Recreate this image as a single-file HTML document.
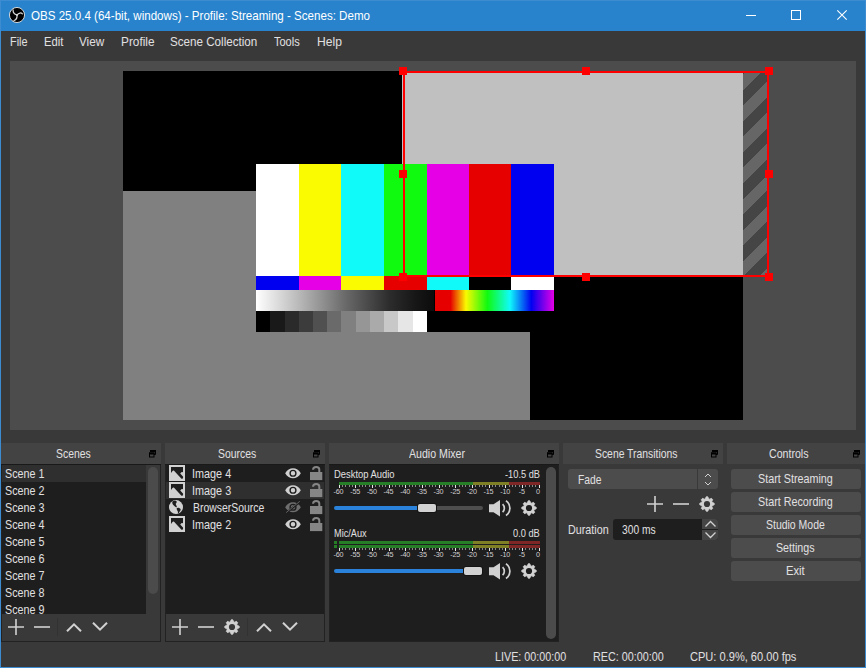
<!DOCTYPE html>
<html><head><meta charset="utf-8">
<style>
*{margin:0;padding:0;box-sizing:border-box}
html,body{width:866px;height:668px;overflow:hidden}
body{position:relative;background:#3d8bd0;font-family:"Liberation Sans",sans-serif}
.a{position:absolute}
.t{position:absolute;white-space:pre;line-height:1;transform-origin:0 0}
.tl{font-size:7.2px;color:#d0cfd0;width:30px;text-align:center;letter-spacing:-0.2px}
svg{position:absolute;overflow:visible}
.dt{position:absolute;top:443px;height:21px;background:#444344}
.dl{position:absolute;top:464px;height:1px;background:#1a191a}
.fl{position:absolute;top:450px;width:8px;height:8px}
.btn{position:absolute;left:731px;width:130px;height:20px;background:#4d4c4d;border-radius:3px}
</style></head><body>
<!-- main window bg -->
<div class="a" style="left:1px;top:1px;width:864px;height:30px;background:#2883cc"></div>
<div class="a" style="left:1px;top:31px;width:864px;height:636px;background:#3a393a"></div>

<!-- OBS logo -->
<svg style="left:9px;top:7px" width="16" height="16" viewBox="0 0 16 16">
  <circle cx="8" cy="8" r="7.55" fill="#000" stroke="#e6e6e6" stroke-width="0.9"/>
  <path d="M4.1 2.9C3.9 5.4 5.2 7.3 8 8M13.4 6.9C12.2 5.5 9.9 5.6 8 8M4.9 13.7C7.0 12.8 8.4 10.8 8 8" fill="none" stroke="#d6d6d6" stroke-width="1.25" stroke-linecap="round"/>
  <circle cx="8" cy="8" r="1.0" fill="#d6d6d6"/>
</svg>
<!-- window controls -->
<div class="a" style="left:746px;top:15px;width:10px;height:1px;background:#fff"></div>
<div class="a" style="left:791px;top:10px;width:10px;height:10px;border:1px solid #fff"></div>
<svg style="left:837px;top:10px" width="10" height="10" viewBox="0 0 10 10">
  <path d="M0.3 0.3 L9.7 9.7 M9.7 0.3 L0.3 9.7" stroke="#fff" stroke-width="1.1"/>
</svg>

<!-- preview -->
<div class="a" style="left:10px;top:61px;width:846px;height:369px;background:#4c4c4c"></div>
<div class="a" style="left:123px;top:71px;width:620px;height:349px;background:#000"></div>
<div class="a" style="left:123px;top:191px;width:407px;height:229px;background:#808080"></div>
<div class="a" style="left:402px;top:71px;width:341px;height:206px;background:#c0c0c0"></div>
<div class="a" style="left:743px;top:71px;width:25px;height:206px;background:repeating-linear-gradient(-45deg,#666 0,#666 6.8px,#454545 6.8px,#454545 17.8px,#666 17.8px,#666 22px)"></div>
<!-- color bars -->
<div class="a" style="left:256px;top:164px;width:298px;height:168px;background:#000"></div>
<div class="a" style="left:256px;top:164px;width:43px;height:112px;background:#fff"></div>
<div class="a" style="left:299px;top:164px;width:42px;height:112px;background:#fafa00"></div>
<div class="a" style="left:341px;top:164px;width:43px;height:112px;background:#10fafa"></div>
<div class="a" style="left:384px;top:164px;width:43px;height:112px;background:#10fa10"></div>
<div class="a" style="left:427px;top:164px;width:42px;height:112px;background:#e600e6"></div>
<div class="a" style="left:469px;top:164px;width:42px;height:112px;background:#e60000"></div>
<div class="a" style="left:511px;top:164px;width:43px;height:112px;background:#0000f0"></div>
<div class="a" style="left:256px;top:276px;width:43px;height:14px;background:#0000f0"></div>
<div class="a" style="left:299px;top:276px;width:42px;height:14px;background:#e600e6"></div>
<div class="a" style="left:341px;top:276px;width:43px;height:14px;background:#fafa00"></div>
<div class="a" style="left:384px;top:276px;width:43px;height:14px;background:#e60000"></div>
<div class="a" style="left:427px;top:276px;width:42px;height:14px;background:#10fafa"></div>
<div class="a" style="left:469px;top:276px;width:42px;height:14px;background:#000"></div>
<div class="a" style="left:511px;top:276px;width:43px;height:14px;background:#fff"></div>
<div class="a" style="left:256px;top:290px;width:178px;height:21px;background:linear-gradient(90deg,#fff 0%,#b6b6b6 25%,#6a6a6a 50%,#2c2c2c 75%,#161616 90%,#0c0c0c 100%)"></div>
<div class="a" style="left:435px;top:290px;width:119px;height:21px;background:linear-gradient(90deg,#e60000 0,#e60000 13%,#fafa00 26%,#10fa10 44%,#10fafa 63%,#0000f0 81%,#e600e6 100%)"></div>
<div class="a" style="left:256px;top:311px;width:171px;height:21px;background:linear-gradient(90deg,#000 0,#000 8.33%,#191919 8.33%,#191919 16.67%,#2a2a2a 16.67%,#2a2a2a 25%,#3c3c3c 25%,#3c3c3c 33.33%,#505050 33.33%,#505050 41.67%,#6a6a6a 41.67%,#6a6a6a 50%,#808080 50%,#808080 58.33%,#969696 58.33%,#969696 66.67%,#aaaaaa 66.67%,#aaaaaa 75%,#c8c8c8 75%,#c8c8c8 83.33%,#e6e6e6 83.33%,#e6e6e6 91.67%,#fff 91.67%)"></div>
<!-- selection box -->
<div class="a" style="left:403px;top:71px;width:366px;height:206px;border:2px solid #ff0000"></div>
<div class="a" style="left:399px;top:67px;width:8px;height:8px;background:#f00"></div>
<div class="a" style="left:582px;top:67px;width:8px;height:8px;background:#f00"></div>
<div class="a" style="left:765px;top:67px;width:8px;height:8px;background:#f00"></div>
<div class="a" style="left:399px;top:170px;width:8px;height:8px;background:#f00"></div>
<div class="a" style="left:765px;top:170px;width:8px;height:8px;background:#f00"></div>
<div class="a" style="left:399px;top:273px;width:8px;height:8px;background:#f00"></div>
<div class="a" style="left:582px;top:273px;width:8px;height:8px;background:#f00"></div>
<div class="a" style="left:765px;top:273px;width:8px;height:8px;background:#f00"></div>

<!-- ===== docks ===== -->
<!-- titles -->
<div class="dt" style="left:1px;width:160px"></div><div class="dl" style="left:1px;width:160px"></div>
<div class="dt" style="left:165px;width:160px"></div><div class="dl" style="left:165px;width:160px"></div>
<div class="dt" style="left:329px;width:230px"></div><div class="dl" style="left:329px;width:230px"></div>
<div class="dt" style="left:563px;width:160px"></div>
<div class="dt" style="left:727px;width:138px"></div>
<!-- float icons -->
<svg class="fl" style="left:149px" viewBox="0 0 8 8"><path d="M1.5 0.5h5v4h-1.5" fill="none" stroke="#000" stroke-width="1"/><rect x="1" y="0" width="6" height="2" fill="#000"/><rect x="0.5" y="3" width="4.5" height="4" fill="none" stroke="#000" stroke-width="1"/><rect x="0" y="2.5" width="5.5" height="2" fill="#000"/></svg>
<svg class="fl" style="left:313px" viewBox="0 0 8 8"><path d="M1.5 0.5h5v4h-1.5" fill="none" stroke="#000" stroke-width="1"/><rect x="1" y="0" width="6" height="2" fill="#000"/><rect x="0.5" y="3" width="4.5" height="4" fill="none" stroke="#000" stroke-width="1"/><rect x="0" y="2.5" width="5.5" height="2" fill="#000"/></svg>
<svg class="fl" style="left:547px" viewBox="0 0 8 8"><path d="M1.5 0.5h5v4h-1.5" fill="none" stroke="#000" stroke-width="1"/><rect x="1" y="0" width="6" height="2" fill="#000"/><rect x="0.5" y="3" width="4.5" height="4" fill="none" stroke="#000" stroke-width="1"/><rect x="0" y="2.5" width="5.5" height="2" fill="#000"/></svg>
<svg class="fl" style="left:711px" viewBox="0 0 8 8"><path d="M1.5 0.5h5v4h-1.5" fill="none" stroke="#000" stroke-width="1"/><rect x="1" y="0" width="6" height="2" fill="#000"/><rect x="0.5" y="3" width="4.5" height="4" fill="none" stroke="#000" stroke-width="1"/><rect x="0" y="2.5" width="5.5" height="2" fill="#000"/></svg>
<svg class="fl" style="left:853px" viewBox="0 0 8 8"><path d="M1.5 0.5h5v4h-1.5" fill="none" stroke="#000" stroke-width="1"/><rect x="1" y="0" width="6" height="2" fill="#000"/><rect x="0.5" y="3" width="4.5" height="4" fill="none" stroke="#000" stroke-width="1"/><rect x="0" y="2.5" width="5.5" height="2" fill="#000"/></svg>

<!-- Scenes dock -->
<div class="a" style="left:1px;top:465px;width:160px;height:177px;background:#232223"></div>
<div class="a" style="left:2px;top:465px;width:144px;height:149px;background:#1f1e1f"></div>
<div class="a" style="left:2px;top:465px;width:144px;height:17px;background:#302f30"></div>
<div class="a" style="left:146px;top:465px;width:14px;height:149px;background:#3a393a"></div>
<div class="a" style="left:148px;top:467px;width:10px;height:127px;background:#4c4b4c;border-radius:5px"></div>
<div class="a" style="left:2px;top:614px;width:158px;height:27px;background:#3a393a"></div>

<!-- Sources dock -->
<div class="a" style="left:165px;top:465px;width:160px;height:177px;background:#232223"></div>
<div class="a" style="left:166px;top:465px;width:158px;height:149px;background:#1f1e1f"></div>
<div class="a" style="left:166px;top:482px;width:158px;height:17px;background:#302f30"></div>
<div class="a" style="left:166px;top:614px;width:158px;height:27px;background:#3a393a"></div>

<!-- Mixer dock -->
<div class="a" style="left:329px;top:465px;width:230px;height:177px;background:#232223"></div>
<div class="a" style="left:330px;top:465px;width:228px;height:176px;background:#1f1e1f"></div>
<div class="a" style="left:546px;top:467px;width:10px;height:172px;background:#4c4b4c;border-radius:5px"></div>

<!-- Transitions dock -->
<div class="a" style="left:568px;top:469px;width:150px;height:20px;background:#4d4c4d;border-radius:3px"></div>
<div class="a" style="left:697px;top:469px;width:1px;height:20px;background:#3a393a"></div>
<div class="a" style="left:613px;top:519px;width:105px;height:21px;background:#1f1e1f;border-radius:3px"></div>
<div class="a" style="left:702px;top:519px;width:16px;height:10px;background:#464546;border-radius:0 3px 0 0"></div>
<div class="a" style="left:702px;top:530px;width:16px;height:10px;background:#464546;border-radius:0 0 3px 0"></div>

<!-- Controls -->
<div class="btn" style="top:469px"></div>
<div class="btn" style="top:492px"></div>
<div class="btn" style="top:515px"></div>
<div class="btn" style="top:538px"></div>
<div class="btn" style="top:561px"></div>

<svg style="left:169px;top:465px" width="16" height="16" viewBox="0 0 16 16">
<rect x="0" y="0" width="16" height="16" fill="#d2d1d2"/>
<path d="M2 2H14V7.4C13.4 6.8 12.2 6.9 11.7 7.9L11.2 8.6L14 11.5C14.4 12.3 14.2 13.2 13.6 13.6C13.0 14 12.4 13.8 12 13.3L5.3 6.0C4.7 5.4 4.0 5.5 3.5 6.1L2 8Z" fill="#1f1e1f"/>
<rect x="1" y="1" width="14" height="14" fill="none" stroke="#d2d1d2" stroke-width="1.2"/>
</svg>
<svg style="left:169px;top:482px" width="16" height="16" viewBox="0 0 16 16">
<rect x="0" y="0" width="16" height="16" fill="#d2d1d2"/>
<path d="M2 2H14V7.4C13.4 6.8 12.2 6.9 11.7 7.9L11.2 8.6L14 11.5C14.4 12.3 14.2 13.2 13.6 13.6C13.0 14 12.4 13.8 12 13.3L5.3 6.0C4.7 5.4 4.0 5.5 3.5 6.1L2 8Z" fill="#1f1e1f"/>
<rect x="1" y="1" width="14" height="14" fill="none" stroke="#d2d1d2" stroke-width="1.2"/>
</svg>
<svg style="left:169px;top:516px" width="16" height="16" viewBox="0 0 16 16">
<rect x="0" y="0" width="16" height="16" fill="#d2d1d2"/>
<path d="M2 2H14V7.4C13.4 6.8 12.2 6.9 11.7 7.9L11.2 8.6L14 11.5C14.4 12.3 14.2 13.2 13.6 13.6C13.0 14 12.4 13.8 12 13.3L5.3 6.0C4.7 5.4 4.0 5.5 3.5 6.1L2 8Z" fill="#1f1e1f"/>
<rect x="1" y="1" width="14" height="14" fill="none" stroke="#d2d1d2" stroke-width="1.2"/>
</svg>
<svg style="left:169px;top:500px" width="16" height="16" viewBox="0 0 16 16">
<circle cx="7" cy="7.1" r="7" fill="#d2d1d2"/>
<path d="M3.6 1.2L6.2 0.6L7.8 1.4L7.4 3.0L6.7 3.7L7.1 5.0L7.9 6.6L7.3 7.5L5.6 6.2L4.0 4.8L3.2 3.0Z" fill="#1f1e1f"/>
<path d="M7.7 8.0L9.8 7.8L11.7 9.1L11.3 10.8L10.3 12.0L9.7 13.6L9.0 13.2L8.8 11.3L7.9 9.9Z" fill="#1f1e1f"/>
</svg>
<svg style="left:285px;top:468px" width="16" height="10.5" viewBox="0 0 17 11">
<path d="M0.2 5.5C2.2 2.0 5.2 0.2 8.5 0.2C11.8 0.2 14.8 2.0 16.8 5.5C14.8 9.0 11.8 10.8 8.5 10.8C5.2 10.8 2.2 9.0 0.2 5.5Z" fill="#d2d1d2"/>
<circle cx="8.5" cy="5.5" r="3.1" fill="none" stroke="#1f1e1f" stroke-width="1.5"/></svg>
<svg style="left:310px;top:466px" width="14" height="15" viewBox="0 0 14 15">
<path d="M3.1 3.8V3.6C3.1 1.9 4.5 1.0 6.2 1.0C7.9 1.0 9.3 1.9 9.3 3.6V7" fill="none" stroke="#878687" stroke-width="2"/>
<rect x="0" y="6" width="12.3" height="8.1" fill="#878687"/>
</svg>
<svg style="left:285px;top:485px" width="16" height="10.5" viewBox="0 0 17 11">
<path d="M0.2 5.5C2.2 2.0 5.2 0.2 8.5 0.2C11.8 0.2 14.8 2.0 16.8 5.5C14.8 9.0 11.8 10.8 8.5 10.8C5.2 10.8 2.2 9.0 0.2 5.5Z" fill="#d2d1d2"/>
<circle cx="8.5" cy="5.5" r="3.1" fill="none" stroke="#1f1e1f" stroke-width="1.5"/></svg>
<svg style="left:310px;top:483px" width="14" height="15" viewBox="0 0 14 15">
<path d="M3.1 3.8V3.6C3.1 1.9 4.5 1.0 6.2 1.0C7.9 1.0 9.3 1.9 9.3 3.6V7" fill="none" stroke="#878687" stroke-width="2"/>
<rect x="0" y="6" width="12.3" height="8.1" fill="#878687"/>
</svg>
<svg style="left:285px;top:502px" width="16" height="10.5" viewBox="0 0 17 11">
<path d="M0.2 5.5C2.2 2.0 5.2 0.2 8.5 0.2C11.8 0.2 14.8 2.0 16.8 5.5C14.8 9.0 11.8 10.8 8.5 10.8C5.2 10.8 2.2 9.0 0.2 5.5Z" fill="#6f6e6f"/>
<circle cx="8.5" cy="5.5" r="3.1" fill="none" stroke="#1f1e1f" stroke-width="1.5"/><path d="M1.5 11.5L16 -0.5" stroke="#1f1e1f" stroke-width="2.2"/><path d="M1.2 11.2L15.7 -0.8" stroke="#6f6e6f" stroke-width="0.9"/></svg>
<svg style="left:310px;top:500px" width="14" height="15" viewBox="0 0 14 15">
<path d="M3.1 3.8V3.6C3.1 1.9 4.5 1.0 6.2 1.0C7.9 1.0 9.3 1.9 9.3 3.6V7" fill="none" stroke="#878687" stroke-width="2"/>
<rect x="0" y="6" width="12.3" height="8.1" fill="#878687"/>
</svg>
<svg style="left:285px;top:519px" width="16" height="10.5" viewBox="0 0 17 11">
<path d="M0.2 5.5C2.2 2.0 5.2 0.2 8.5 0.2C11.8 0.2 14.8 2.0 16.8 5.5C14.8 9.0 11.8 10.8 8.5 10.8C5.2 10.8 2.2 9.0 0.2 5.5Z" fill="#d2d1d2"/>
<circle cx="8.5" cy="5.5" r="3.1" fill="none" stroke="#1f1e1f" stroke-width="1.5"/></svg>
<svg style="left:310px;top:517px" width="14" height="15" viewBox="0 0 14 15">
<path d="M3.1 3.8V3.6C3.1 1.9 4.5 1.0 6.2 1.0C7.9 1.0 9.3 1.9 9.3 3.6V7" fill="none" stroke="#878687" stroke-width="2"/>
<rect x="0" y="6" width="12.3" height="8.1" fill="#878687"/>
</svg>
<svg style="left:8px;top:619px" width="16" height="16" viewBox="0 0 16 16"><path d="M0 8H16M8 0V16" stroke="#d2d1d2" stroke-width="1.6"/></svg>
<svg style="left:34px;top:619px" width="16" height="16" viewBox="0 0 16 16"><path d="M0 8H16" stroke="#d2d1d2" stroke-width="1.6"/></svg>
<svg style="left:66px;top:619px" width="16" height="16" viewBox="0 0 16 16"><path d="M1 12.3L8 5.3L15 12.3" fill="none" stroke="#d2d1d2" stroke-width="2"/></svg>
<svg style="left:92px;top:619px" width="16" height="16" viewBox="0 0 16 16"><path d="M1 3.7L8 10.7L15 3.7" fill="none" stroke="#d2d1d2" stroke-width="2"/></svg>
<div class="a" style="left:57px;top:618px;width:1px;height:18px;background:#333233"></div>
<svg style="left:172px;top:619px" width="16" height="16" viewBox="0 0 16 16"><path d="M0 8H16M8 0V16" stroke="#d2d1d2" stroke-width="1.6"/></svg>
<svg style="left:198px;top:619px" width="16" height="16" viewBox="0 0 16 16"><path d="M0 8H16" stroke="#d2d1d2" stroke-width="1.6"/></svg>
<svg style="left:224px;top:619px" width="16" height="16" viewBox="0 0 16 16"><path d="M5.93 3.01 L6.55 2.59 L7.25 0.84 L8.75 0.84 L9.45 2.59 L10.07 3.01 L10.80 3.15 L12.53 2.40 L13.60 3.47 L12.85 5.20 L12.99 5.93 L13.41 6.55 L15.16 7.25 L15.16 8.75 L13.41 9.45 L12.99 10.07 L12.85 10.80 L13.60 12.53 L12.53 13.60 L10.80 12.85 L10.07 12.99 L9.45 13.41 L8.75 15.16 L7.25 15.16 L6.55 13.41 L5.93 12.99 L5.20 12.85 L3.47 13.60 L2.40 12.53 L3.15 10.80 L3.01 10.07 L2.59 9.45 L0.84 8.75 L0.84 7.25 L2.59 6.55 L3.01 5.93 L3.15 5.20 L2.40 3.47 L3.47 2.40 L5.20 3.15Z" fill="#d2d1d2" stroke="#d2d1d2" stroke-width="1" stroke-linejoin="round"/><circle cx="8" cy="8" r="3.1" fill="#3a393a"/></svg>
<svg style="left:256px;top:619px" width="16" height="16" viewBox="0 0 16 16"><path d="M1 12.3L8 5.3L15 12.3" fill="none" stroke="#d2d1d2" stroke-width="2"/></svg>
<svg style="left:282px;top:619px" width="16" height="16" viewBox="0 0 16 16"><path d="M1 3.7L8 10.7L15 3.7" fill="none" stroke="#d2d1d2" stroke-width="2"/></svg>
<div class="a" style="left:247px;top:618px;width:1px;height:18px;background:#333233"></div>
<div class="a" style="left:334px;top:506px;width:86px;height:4px;background:#2a82da;border-radius:2px"></div>
<div class="a" style="left:430px;top:506px;width:53px;height:4px;background:#4f4e4f;border-radius:2px"></div>
<div class="a" style="left:418px;top:504px;width:18px;height:8px;background:#d3d2d3;border-radius:2px;box-shadow:0 0 0 1px #151415"></div>
<div class="a" style="left:334px;top:569px;width:132px;height:4px;background:#2a82da;border-radius:2px"></div>
<div class="a" style="left:464px;top:567px;width:18px;height:8px;background:#d3d2d3;border-radius:2px;box-shadow:0 0 0 1px #151415"></div>
<svg style="left:489px;top:500px" width="24" height="17" viewBox="0 0 24 17">
<path d="M0 4.3H4.5L11 0V16.4L4.5 12.2H0Z" fill="#d2d1d2"/>
<path d="M13.6 4.2A5.5 5.5 0 0 1 13.6 12.2" fill="none" stroke="#d2d1d2" stroke-width="1.7"/>
<path d="M17 0.8A9 9 0 0 1 17 15.6" fill="none" stroke="#d2d1d2" stroke-width="1.8"/>
</svg>
<svg style="left:521px;top:500px" width="16" height="16" viewBox="0 0 16 16"><path d="M5.93 3.01 L6.55 2.59 L7.25 0.84 L8.75 0.84 L9.45 2.59 L10.07 3.01 L10.80 3.15 L12.53 2.40 L13.60 3.47 L12.85 5.20 L12.99 5.93 L13.41 6.55 L15.16 7.25 L15.16 8.75 L13.41 9.45 L12.99 10.07 L12.85 10.80 L13.60 12.53 L12.53 13.60 L10.80 12.85 L10.07 12.99 L9.45 13.41 L8.75 15.16 L7.25 15.16 L6.55 13.41 L5.93 12.99 L5.20 12.85 L3.47 13.60 L2.40 12.53 L3.15 10.80 L3.01 10.07 L2.59 9.45 L0.84 8.75 L0.84 7.25 L2.59 6.55 L3.01 5.93 L3.15 5.20 L2.40 3.47 L3.47 2.40 L5.20 3.15Z" fill="#d2d1d2" stroke="#d2d1d2" stroke-width="1" stroke-linejoin="round"/><circle cx="8" cy="8" r="3.1" fill="#1f1e1f"/></svg>
<svg style="left:489px;top:563px" width="24" height="17" viewBox="0 0 24 17">
<path d="M0 4.3H4.5L11 0V16.4L4.5 12.2H0Z" fill="#d2d1d2"/>
<path d="M13.6 4.2A5.5 5.5 0 0 1 13.6 12.2" fill="none" stroke="#d2d1d2" stroke-width="1.7"/>
<path d="M17 0.8A9 9 0 0 1 17 15.6" fill="none" stroke="#d2d1d2" stroke-width="1.8"/>
</svg>
<svg style="left:521px;top:563px" width="16" height="16" viewBox="0 0 16 16"><path d="M5.93 3.01 L6.55 2.59 L7.25 0.84 L8.75 0.84 L9.45 2.59 L10.07 3.01 L10.80 3.15 L12.53 2.40 L13.60 3.47 L12.85 5.20 L12.99 5.93 L13.41 6.55 L15.16 7.25 L15.16 8.75 L13.41 9.45 L12.99 10.07 L12.85 10.80 L13.60 12.53 L12.53 13.60 L10.80 12.85 L10.07 12.99 L9.45 13.41 L8.75 15.16 L7.25 15.16 L6.55 13.41 L5.93 12.99 L5.20 12.85 L3.47 13.60 L2.40 12.53 L3.15 10.80 L3.01 10.07 L2.59 9.45 L0.84 8.75 L0.84 7.25 L2.59 6.55 L3.01 5.93 L3.15 5.20 L2.40 3.47 L3.47 2.40 L5.20 3.15Z" fill="#d2d1d2" stroke="#d2d1d2" stroke-width="1" stroke-linejoin="round"/><circle cx="8" cy="8" r="3.1" fill="#1f1e1f"/></svg>
<svg style="left:647px;top:496px" width="16" height="16" viewBox="0 0 16 16"><path d="M0 8H16M8 0V16" stroke="#d2d1d2" stroke-width="1.6"/></svg>
<svg style="left:673px;top:496px" width="16" height="16" viewBox="0 0 16 16"><path d="M0 8H16" stroke="#d2d1d2" stroke-width="1.6"/></svg>
<svg style="left:699px;top:496px" width="16" height="16" viewBox="0 0 16 16"><path d="M5.93 3.01 L6.55 2.59 L7.25 0.84 L8.75 0.84 L9.45 2.59 L10.07 3.01 L10.80 3.15 L12.53 2.40 L13.60 3.47 L12.85 5.20 L12.99 5.93 L13.41 6.55 L15.16 7.25 L15.16 8.75 L13.41 9.45 L12.99 10.07 L12.85 10.80 L13.60 12.53 L12.53 13.60 L10.80 12.85 L10.07 12.99 L9.45 13.41 L8.75 15.16 L7.25 15.16 L6.55 13.41 L5.93 12.99 L5.20 12.85 L3.47 13.60 L2.40 12.53 L3.15 10.80 L3.01 10.07 L2.59 9.45 L0.84 8.75 L0.84 7.25 L2.59 6.55 L3.01 5.93 L3.15 5.20 L2.40 3.47 L3.47 2.40 L5.20 3.15Z" fill="#d2d1d2" stroke="#d2d1d2" stroke-width="1" stroke-linejoin="round"/><circle cx="8" cy="8" r="3.1" fill="#3a393a"/></svg>
<svg style="left:704px;top:473px" width="8" height="13" viewBox="0 0 8 13"><path d="M1 4L4 1L7 4M1 9L4 12L7 9" fill="none" stroke="#d2d1d2" stroke-width="1"/></svg>
<svg style="left:705px;top:520px" width="11" height="20" viewBox="0 0 11 20"><path d="M0.5 6.5L5.5 1.5L10.5 6.5M0.5 12.5L5.5 17.5L10.5 12.5" fill="none" stroke="#d2d1d2" stroke-width="1.3"/></svg>
<div class=a style='left:339px;top:482px;width:134px;height:3px;background:#267f26'></div>
<div class=a style='left:473px;top:482px;width:36px;height:3px;background:#7f7f26'></div>
<div class=a style='left:509px;top:482px;width:31px;height:3px;background:#7f2626'></div>
<div class=a style='left:339px;top:485px;width:1px;height:3px;background:#e8e7e8'></div>
<div class=a style='left:342px;top:485px;width:1px;height:2px;background:#8a898a'></div>
<div class=a style='left:345px;top:485px;width:1px;height:2px;background:#8a898a'></div>
<div class=a style='left:349px;top:485px;width:1px;height:2px;background:#8a898a'></div>
<div class=a style='left:352px;top:485px;width:1px;height:2px;background:#8a898a'></div>
<div class=a style='left:355px;top:485px;width:1px;height:3px;background:#e8e7e8'></div>
<div class=a style='left:359px;top:485px;width:1px;height:2px;background:#8a898a'></div>
<div class=a style='left:362px;top:485px;width:1px;height:2px;background:#8a898a'></div>
<div class=a style='left:365px;top:485px;width:1px;height:2px;background:#8a898a'></div>
<div class=a style='left:369px;top:485px;width:1px;height:2px;background:#8a898a'></div>
<div class=a style='left:372px;top:485px;width:1px;height:3px;background:#e8e7e8'></div>
<div class=a style='left:375px;top:485px;width:1px;height:2px;background:#8a898a'></div>
<div class=a style='left:379px;top:485px;width:1px;height:2px;background:#8a898a'></div>
<div class=a style='left:382px;top:485px;width:1px;height:2px;background:#8a898a'></div>
<div class=a style='left:385px;top:485px;width:1px;height:2px;background:#8a898a'></div>
<div class=a style='left:389px;top:485px;width:1px;height:3px;background:#e8e7e8'></div>
<div class=a style='left:392px;top:485px;width:1px;height:2px;background:#8a898a'></div>
<div class=a style='left:395px;top:485px;width:1px;height:2px;background:#8a898a'></div>
<div class=a style='left:399px;top:485px;width:1px;height:2px;background:#8a898a'></div>
<div class=a style='left:402px;top:485px;width:1px;height:2px;background:#8a898a'></div>
<div class=a style='left:405px;top:485px;width:1px;height:3px;background:#e8e7e8'></div>
<div class=a style='left:409px;top:485px;width:1px;height:2px;background:#8a898a'></div>
<div class=a style='left:412px;top:485px;width:1px;height:2px;background:#8a898a'></div>
<div class=a style='left:415px;top:485px;width:1px;height:2px;background:#8a898a'></div>
<div class=a style='left:419px;top:485px;width:1px;height:2px;background:#8a898a'></div>
<div class=a style='left:422px;top:485px;width:1px;height:3px;background:#e8e7e8'></div>
<div class=a style='left:425px;top:485px;width:1px;height:2px;background:#8a898a'></div>
<div class=a style='left:429px;top:485px;width:1px;height:2px;background:#8a898a'></div>
<div class=a style='left:432px;top:485px;width:1px;height:2px;background:#8a898a'></div>
<div class=a style='left:435px;top:485px;width:1px;height:2px;background:#8a898a'></div>
<div class=a style='left:439px;top:485px;width:1px;height:3px;background:#e8e7e8'></div>
<div class=a style='left:442px;top:485px;width:1px;height:2px;background:#8a898a'></div>
<div class=a style='left:445px;top:485px;width:1px;height:2px;background:#8a898a'></div>
<div class=a style='left:449px;top:485px;width:1px;height:2px;background:#8a898a'></div>
<div class=a style='left:452px;top:485px;width:1px;height:2px;background:#8a898a'></div>
<div class=a style='left:455px;top:485px;width:1px;height:3px;background:#e8e7e8'></div>
<div class=a style='left:459px;top:485px;width:1px;height:2px;background:#8a898a'></div>
<div class=a style='left:462px;top:485px;width:1px;height:2px;background:#8a898a'></div>
<div class=a style='left:465px;top:485px;width:1px;height:2px;background:#8a898a'></div>
<div class=a style='left:469px;top:485px;width:1px;height:2px;background:#8a898a'></div>
<div class=a style='left:472px;top:485px;width:1px;height:3px;background:#e8e7e8'></div>
<div class=a style='left:475px;top:485px;width:1px;height:2px;background:#8a898a'></div>
<div class=a style='left:479px;top:485px;width:1px;height:2px;background:#8a898a'></div>
<div class=a style='left:482px;top:485px;width:1px;height:2px;background:#8a898a'></div>
<div class=a style='left:485px;top:485px;width:1px;height:2px;background:#8a898a'></div>
<div class=a style='left:489px;top:485px;width:1px;height:3px;background:#e8e7e8'></div>
<div class=a style='left:492px;top:485px;width:1px;height:2px;background:#8a898a'></div>
<div class=a style='left:495px;top:485px;width:1px;height:2px;background:#8a898a'></div>
<div class=a style='left:499px;top:485px;width:1px;height:2px;background:#8a898a'></div>
<div class=a style='left:502px;top:485px;width:1px;height:2px;background:#8a898a'></div>
<div class=a style='left:505px;top:485px;width:1px;height:3px;background:#e8e7e8'></div>
<div class=a style='left:509px;top:485px;width:1px;height:2px;background:#8a898a'></div>
<div class=a style='left:512px;top:485px;width:1px;height:2px;background:#8a898a'></div>
<div class=a style='left:515px;top:485px;width:1px;height:2px;background:#8a898a'></div>
<div class=a style='left:519px;top:485px;width:1px;height:2px;background:#8a898a'></div>
<div class=a style='left:522px;top:485px;width:1px;height:3px;background:#e8e7e8'></div>
<div class=a style='left:525px;top:485px;width:1px;height:2px;background:#8a898a'></div>
<div class=a style='left:529px;top:485px;width:1px;height:2px;background:#8a898a'></div>
<div class=a style='left:532px;top:485px;width:1px;height:2px;background:#8a898a'></div>
<div class=a style='left:535px;top:485px;width:1px;height:2px;background:#8a898a'></div>
<div class=a style='left:539px;top:485px;width:1px;height:3px;background:#e8e7e8'></div>
<div class='t tl' style='left:323.50px;top:487.90px'>-60</div>
<div class='t tl' style='left:340.17px;top:487.90px'>-55</div>
<div class='t tl' style='left:356.83px;top:487.90px'>-50</div>
<div class='t tl' style='left:373.50px;top:487.90px'>-45</div>
<div class='t tl' style='left:390.17px;top:487.90px'>-40</div>
<div class='t tl' style='left:406.83px;top:487.90px'>-35</div>
<div class='t tl' style='left:423.50px;top:487.90px'>-30</div>
<div class='t tl' style='left:440.17px;top:487.90px'>-25</div>
<div class='t tl' style='left:456.83px;top:487.90px'>-20</div>
<div class='t tl' style='left:473.50px;top:487.90px'>-15</div>
<div class='t tl' style='left:490.17px;top:487.90px'>-10</div>
<div class='t tl' style='left:506.83px;top:487.90px'>-5</div>
<div class='t tl' style='left:522.80px;top:487.90px'>0</div>
<div class=a style='left:339px;top:541px;width:134px;height:3px;background:#267f26'></div>
<div class=a style='left:473px;top:541px;width:36px;height:3px;background:#7f7f26'></div>
<div class=a style='left:509px;top:541px;width:31px;height:3px;background:#7f2626'></div>
<div class=a style='left:334px;top:541px;width:3px;height:3px;background:#267f26'></div>
<div class=a style='left:339px;top:545px;width:134px;height:3px;background:#267f26'></div>
<div class=a style='left:473px;top:545px;width:36px;height:3px;background:#7f7f26'></div>
<div class=a style='left:509px;top:545px;width:31px;height:3px;background:#7f2626'></div>
<div class=a style='left:334px;top:545px;width:3px;height:3px;background:#267f26'></div>
<div class=a style='left:339px;top:548px;width:1px;height:3px;background:#e8e7e8'></div>
<div class=a style='left:342px;top:548px;width:1px;height:2px;background:#8a898a'></div>
<div class=a style='left:345px;top:548px;width:1px;height:2px;background:#8a898a'></div>
<div class=a style='left:349px;top:548px;width:1px;height:2px;background:#8a898a'></div>
<div class=a style='left:352px;top:548px;width:1px;height:2px;background:#8a898a'></div>
<div class=a style='left:355px;top:548px;width:1px;height:3px;background:#e8e7e8'></div>
<div class=a style='left:359px;top:548px;width:1px;height:2px;background:#8a898a'></div>
<div class=a style='left:362px;top:548px;width:1px;height:2px;background:#8a898a'></div>
<div class=a style='left:365px;top:548px;width:1px;height:2px;background:#8a898a'></div>
<div class=a style='left:369px;top:548px;width:1px;height:2px;background:#8a898a'></div>
<div class=a style='left:372px;top:548px;width:1px;height:3px;background:#e8e7e8'></div>
<div class=a style='left:375px;top:548px;width:1px;height:2px;background:#8a898a'></div>
<div class=a style='left:379px;top:548px;width:1px;height:2px;background:#8a898a'></div>
<div class=a style='left:382px;top:548px;width:1px;height:2px;background:#8a898a'></div>
<div class=a style='left:385px;top:548px;width:1px;height:2px;background:#8a898a'></div>
<div class=a style='left:389px;top:548px;width:1px;height:3px;background:#e8e7e8'></div>
<div class=a style='left:392px;top:548px;width:1px;height:2px;background:#8a898a'></div>
<div class=a style='left:395px;top:548px;width:1px;height:2px;background:#8a898a'></div>
<div class=a style='left:399px;top:548px;width:1px;height:2px;background:#8a898a'></div>
<div class=a style='left:402px;top:548px;width:1px;height:2px;background:#8a898a'></div>
<div class=a style='left:405px;top:548px;width:1px;height:3px;background:#e8e7e8'></div>
<div class=a style='left:409px;top:548px;width:1px;height:2px;background:#8a898a'></div>
<div class=a style='left:412px;top:548px;width:1px;height:2px;background:#8a898a'></div>
<div class=a style='left:415px;top:548px;width:1px;height:2px;background:#8a898a'></div>
<div class=a style='left:419px;top:548px;width:1px;height:2px;background:#8a898a'></div>
<div class=a style='left:422px;top:548px;width:1px;height:3px;background:#e8e7e8'></div>
<div class=a style='left:425px;top:548px;width:1px;height:2px;background:#8a898a'></div>
<div class=a style='left:429px;top:548px;width:1px;height:2px;background:#8a898a'></div>
<div class=a style='left:432px;top:548px;width:1px;height:2px;background:#8a898a'></div>
<div class=a style='left:435px;top:548px;width:1px;height:2px;background:#8a898a'></div>
<div class=a style='left:439px;top:548px;width:1px;height:3px;background:#e8e7e8'></div>
<div class=a style='left:442px;top:548px;width:1px;height:2px;background:#8a898a'></div>
<div class=a style='left:445px;top:548px;width:1px;height:2px;background:#8a898a'></div>
<div class=a style='left:449px;top:548px;width:1px;height:2px;background:#8a898a'></div>
<div class=a style='left:452px;top:548px;width:1px;height:2px;background:#8a898a'></div>
<div class=a style='left:455px;top:548px;width:1px;height:3px;background:#e8e7e8'></div>
<div class=a style='left:459px;top:548px;width:1px;height:2px;background:#8a898a'></div>
<div class=a style='left:462px;top:548px;width:1px;height:2px;background:#8a898a'></div>
<div class=a style='left:465px;top:548px;width:1px;height:2px;background:#8a898a'></div>
<div class=a style='left:469px;top:548px;width:1px;height:2px;background:#8a898a'></div>
<div class=a style='left:472px;top:548px;width:1px;height:3px;background:#e8e7e8'></div>
<div class=a style='left:475px;top:548px;width:1px;height:2px;background:#8a898a'></div>
<div class=a style='left:479px;top:548px;width:1px;height:2px;background:#8a898a'></div>
<div class=a style='left:482px;top:548px;width:1px;height:2px;background:#8a898a'></div>
<div class=a style='left:485px;top:548px;width:1px;height:2px;background:#8a898a'></div>
<div class=a style='left:489px;top:548px;width:1px;height:3px;background:#e8e7e8'></div>
<div class=a style='left:492px;top:548px;width:1px;height:2px;background:#8a898a'></div>
<div class=a style='left:495px;top:548px;width:1px;height:2px;background:#8a898a'></div>
<div class=a style='left:499px;top:548px;width:1px;height:2px;background:#8a898a'></div>
<div class=a style='left:502px;top:548px;width:1px;height:2px;background:#8a898a'></div>
<div class=a style='left:505px;top:548px;width:1px;height:3px;background:#e8e7e8'></div>
<div class=a style='left:509px;top:548px;width:1px;height:2px;background:#8a898a'></div>
<div class=a style='left:512px;top:548px;width:1px;height:2px;background:#8a898a'></div>
<div class=a style='left:515px;top:548px;width:1px;height:2px;background:#8a898a'></div>
<div class=a style='left:519px;top:548px;width:1px;height:2px;background:#8a898a'></div>
<div class=a style='left:522px;top:548px;width:1px;height:3px;background:#e8e7e8'></div>
<div class=a style='left:525px;top:548px;width:1px;height:2px;background:#8a898a'></div>
<div class=a style='left:529px;top:548px;width:1px;height:2px;background:#8a898a'></div>
<div class=a style='left:532px;top:548px;width:1px;height:2px;background:#8a898a'></div>
<div class=a style='left:535px;top:548px;width:1px;height:2px;background:#8a898a'></div>
<div class=a style='left:539px;top:548px;width:1px;height:3px;background:#e8e7e8'></div>
<div class='t tl' style='left:323.50px;top:550.90px'>-60</div>
<div class='t tl' style='left:340.17px;top:550.90px'>-55</div>
<div class='t tl' style='left:356.83px;top:550.90px'>-50</div>
<div class='t tl' style='left:373.50px;top:550.90px'>-45</div>
<div class='t tl' style='left:390.17px;top:550.90px'>-40</div>
<div class='t tl' style='left:406.83px;top:550.90px'>-35</div>
<div class='t tl' style='left:423.50px;top:550.90px'>-30</div>
<div class='t tl' style='left:440.17px;top:550.90px'>-25</div>
<div class='t tl' style='left:456.83px;top:550.90px'>-20</div>
<div class='t tl' style='left:473.50px;top:550.90px'>-15</div>
<div class='t tl' style='left:490.17px;top:550.90px'>-10</div>
<div class='t tl' style='left:506.83px;top:550.90px'>-5</div>
<div class='t tl' style='left:522.80px;top:550.90px'>0</div>
<div class=t style="left:31.00px;top:10.13px;font-size:12.6px;color:#ffffff;transform:scaleX(0.9190)">OBS 25.0.4 (64-bit, windows) - Profile: Streaming - Scenes: Demo</div>
<div class=t style="left:9.50px;top:36.27px;font-size:12.2px;color:#e1e0e1;transform:scaleX(0.8910)">File</div>
<div class=t style="left:43.60px;top:36.27px;font-size:12.2px;color:#e1e0e1;transform:scaleX(0.9231)">Edit</div>
<div class=t style="left:79.00px;top:36.27px;font-size:12.2px;color:#e1e0e1;transform:scaleX(0.9617)">View</div>
<div class=t style="left:120.50px;top:36.27px;font-size:12.2px;color:#e1e0e1;transform:scaleX(0.9697)">Profile</div>
<div class=t style="left:170.40px;top:36.27px;font-size:12.2px;color:#e1e0e1;transform:scaleX(0.9544)">Scene Collection</div>
<div class=t style="left:274.30px;top:36.27px;font-size:12.2px;color:#e1e0e1;transform:scaleX(0.9032)">Tools</div>
<div class=t style="left:316.70px;top:36.27px;font-size:12.2px;color:#e1e0e1;transform:scaleX(0.9929)">Help</div>
<div class=t style="left:56.30px;top:447.67px;font-size:12.2px;color:#e1e0e1;transform:scaleX(0.8535)">Scenes</div>
<div class=t style="left:218.40px;top:447.67px;font-size:12.2px;color:#e1e0e1;transform:scaleX(0.8542)">Sources</div>
<div class=t style="left:408.50px;top:447.67px;font-size:12.2px;color:#e1e0e1;transform:scaleX(0.8701)">Audio Mixer</div>
<div class=t style="left:594.50px;top:447.67px;font-size:12.2px;color:#e1e0e1;transform:scaleX(0.8516)">Scene Transitions</div>
<div class=t style="left:768.50px;top:447.67px;font-size:12.2px;color:#e1e0e1;transform:scaleX(0.8702)">Controls</div>
<div class=t style="left:5.00px;top:467.67px;font-size:12.2px;color:#e1e0e1;transform:scaleX(0.8808)">Scene 1</div>
<div class=t style="left:5.00px;top:484.67px;font-size:12.2px;color:#e1e0e1;transform:scaleX(0.8808)">Scene 2</div>
<div class=t style="left:5.00px;top:501.67px;font-size:12.2px;color:#e1e0e1;transform:scaleX(0.8808)">Scene 3</div>
<div class=t style="left:5.00px;top:518.67px;font-size:12.2px;color:#e1e0e1;transform:scaleX(0.8808)">Scene 4</div>
<div class=t style="left:5.00px;top:535.67px;font-size:12.2px;color:#e1e0e1;transform:scaleX(0.8808)">Scene 5</div>
<div class=t style="left:5.00px;top:552.67px;font-size:12.2px;color:#e1e0e1;transform:scaleX(0.8808)">Scene 6</div>
<div class=t style="left:5.00px;top:569.67px;font-size:12.2px;color:#e1e0e1;transform:scaleX(0.8808)">Scene 7</div>
<div class=t style="left:5.00px;top:586.67px;font-size:12.2px;color:#e1e0e1;transform:scaleX(0.8808)">Scene 8</div>
<div class=t style="left:5.00px;top:603.67px;font-size:12.2px;color:#e1e0e1;transform:scaleX(0.8808)">Scene 9</div>
<div class=t style="left:191.90px;top:467.87px;font-size:12.2px;color:#e1e0e1;transform:scaleX(0.8900)">Image 4</div>
<div class=t style="left:191.90px;top:484.87px;font-size:12.2px;color:#e1e0e1;transform:scaleX(0.8900)">Image 3</div>
<div class=t style="left:192.80px;top:501.87px;font-size:12.2px;color:#e1e0e1;transform:scaleX(0.8545)">BrowserSource</div>
<div class=t style="left:191.90px;top:518.87px;font-size:12.2px;color:#e1e0e1;transform:scaleX(0.8900)">Image 2</div>
<div class=t style="left:334.40px;top:469.89px;font-size:10.4px;color:#e1e0e1;transform:scaleX(0.9043)">Desktop Audio</div>
<div class=t style="left:504.80px;top:469.89px;font-size:10.4px;color:#e1e0e1;transform:scaleX(0.8910)">-10.5 dB</div>
<div class=t style="left:334.40px;top:528.89px;font-size:10.4px;color:#e1e0e1;transform:scaleX(0.8822)">Mic/Aux</div>
<div class=t style="left:513.10px;top:528.89px;font-size:10.4px;color:#e1e0e1;transform:scaleX(0.8919)">0.0 dB</div>
<div class=t style="left:577.80px;top:473.67px;font-size:12.2px;color:#e1e0e1;transform:scaleX(0.8423)">Fade</div>
<div class=t style="left:567.60px;top:523.97px;font-size:12.2px;color:#e1e0e1;transform:scaleX(0.8833)">Duration</div>
<div class=t style="left:621.80px;top:523.97px;font-size:12.2px;color:#e1e0e1;transform:scaleX(0.8407)">300 ms</div>
<div class=t style="left:757.50px;top:472.77px;font-size:12.2px;color:#e1e0e1;transform:scaleX(0.8834)">Start Streaming</div>
<div class=t style="left:757.50px;top:495.77px;font-size:12.2px;color:#e1e0e1;transform:scaleX(0.8832)">Start Recording</div>
<div class=t style="left:765.60px;top:518.77px;font-size:12.2px;color:#e1e0e1;transform:scaleX(0.8592)">Studio Mode</div>
<div class=t style="left:775.70px;top:541.77px;font-size:12.2px;color:#e1e0e1;transform:scaleX(0.8763)">Settings</div>
<div class=t style="left:786.30px;top:564.77px;font-size:12.2px;color:#e1e0e1;transform:scaleX(0.9199)">Exit</div>
<div class=t style="left:494.60px;top:650.97px;font-size:12.2px;color:#e1e0e1;transform:scaleX(0.8842)">LIVE: 00:00:00</div>
<div class=t style="left:592.90px;top:650.97px;font-size:12.2px;color:#e1e0e1;transform:scaleX(0.8843)">REC: 00:00:00</div>
<div class=t style="left:689.60px;top:650.97px;font-size:12.2px;color:#e1e0e1;transform:scaleX(0.9078)">CPU: 0.9%, 60.00 fps</div>
</body></html>
